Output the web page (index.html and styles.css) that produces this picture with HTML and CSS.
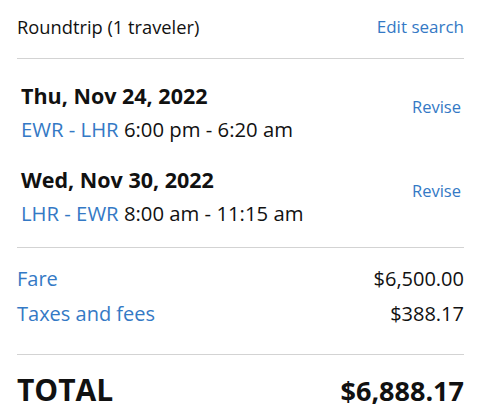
FILE: index.html
```html
<!DOCTYPE html>
<html>
<head>
<meta charset="utf-8">
<link rel="stylesheet" href="styles.css">
</head>
<body>
<div class="summary">
  <div class="header">
    <span class="trip">Roundtrip (1 traveler)</span>
    <a class="link edit">Edit search</a>
  </div>
  <div class="flights">
    <div class="flight">
      <div class="info">
        <div class="date">Thu, Nov 24, 2022</div>
        <div class="route"><span class="link">EWR - LHR</span> 6:00 pm - 6:20 am</div>
      </div>
      <a class="link revise">Revise</a>
    </div>
    <div class="flight">
      <div class="info">
        <div class="date">Wed, Nov 30, 2022</div>
        <div class="route"><span class="link">LHR - EWR</span> 8:00 am - 11:15 am</div>
      </div>
      <a class="link revise">Revise</a>
    </div>
  </div>
  <div class="costs">
    <div class="row"><span class="link">Fare</span><span>$6,500.00</span></div>
    <div class="row"><span class="link">Taxes and fees</span><span>$388.17</span></div>
  </div>
  <div class="total">
    <span>TOTAL</span><span class="amount">$6,888.17</span>
  </div>
</div>
</body>
</html>
```
FILE: styles.css
```css
html, body {
  margin: 0;
  padding: 0;
  background: #fff;
}
body {
  font-family: "Open Sans", "Liberation Sans", sans-serif;
  color: #111;
}
.summary {
  padding: 0 16px 0 17px;
}
.link {
  color: #3479c5;
}
.header {
  display: flex;
  justify-content: space-between;
  align-items: center;
  font-size: 18.3px;
  line-height: 24px;
  padding: 15px 0 19px;
  border-bottom: 1px solid #d3d3d3;
}
.edit {
  font-size: 17px;
}
.flights {
  padding: 22px 3px 21px 4px;
  border-bottom: 1px solid #d3d3d3;
}
.flight {
  display: flex;
  justify-content: space-between;
  align-items: flex-start;
  margin-bottom: 23px;
}
.flight:last-child {
  margin-bottom: 0;
}
.date {
  font-size: 21.5px;
  font-weight: 700;
  line-height: 30px;
}
.route {
  font-size: 20.3px;
  line-height: 26px;
  margin-top: 5px;
}
.revise {
  font-size: 16.5px;
  line-height: 22px;
  margin-top: 15px;
}
.costs {
  padding: 17px 0 26px;
  border-bottom: 1px solid #d3d3d3;
}
.row {
  display: flex;
  justify-content: space-between;
  font-size: 20px;
  line-height: 28px;
  margin-bottom: 7px;
}
.row:last-child {
  margin-bottom: 0;
}
.total {
  display: flex;
  justify-content: space-between;
  align-items: baseline;
  font-size: 30px;
  font-weight: 700;
  line-height: 40px;
  padding-top: 15px;
}
.amount {
  font-size: 27px;
}
```
